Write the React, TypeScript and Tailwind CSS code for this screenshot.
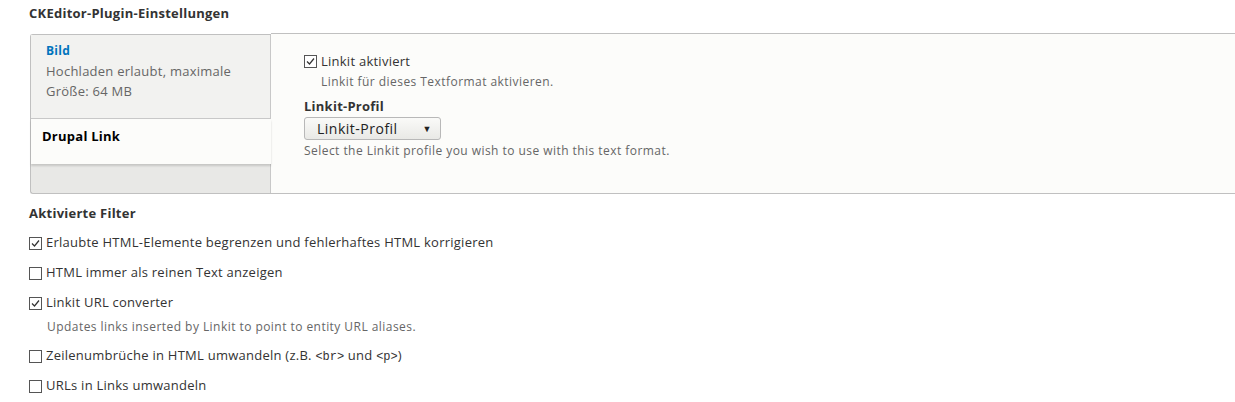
import { type ReactNode } from "react";

function Box({ checked }: { checked?: boolean }) {
  return (
    <span className="inline-flex h-[13px] w-[13px] shrink-0 items-center justify-center border border-[#555] bg-white">
      {checked && (
        <svg width="11" height="11" viewBox="0 0 11 11" fill="none">
          <path d="M2 5.5 L4.5 8 L9 2.5" stroke="#333" strokeWidth="1.2" />
        </svg>
      )}
    </span>
  );
}

const desc = "text-[12px] tracking-[0.45px] text-[#666]";

function Filter({ checked, children, note }: { checked?: boolean; children: ReactNode; note?: string }) {
  return (
    <div>
      <label className="flex h-[30px] items-center gap-[4px]">
        <Box checked={checked} />
        <span>{children}</span>
      </label>
      {note && <p className={`mb-[5px] pl-[18px] ${desc}`}>{note}</p>}
    </div>
  );
}

export default function App() {
  const mono = "font-['Liberation_Mono',monospace] text-[12px] tracking-normal";
  return (
    <div className="h-[402px] overflow-hidden bg-white font-['Open_Sans',sans-serif] text-[13px] tracking-[0.25px] text-[#333]">
      <div className="pl-[29px] pt-[4px]">
        <h3 className="text-[13px] font-bold leading-[18px]">CKEditor-Plugin-Einstellungen</h3>

        <div className="-mr-4 mt-[11px] flex h-[161px]">
          <div className="ml-px mt-px flex w-[241px] flex-col rounded-l-[3px] border-b border-l border-t border-[#c0c0c0] bg-[#e8e8e6]">
            <div className="h-[84px] border-b border-r border-[#c8c8c8] bg-[#f2f2f0] pl-[15px] pt-[6px] leading-[20px]">
              <div className="text-[12px] font-bold text-[#0074bd]">Bild</div>
              <div className="text-[#666]">Hochladen erlaubt, maximale</div>
              <div className="text-[#666]">Größe: 64 MB</div>
            </div>
            <div className="relative z-10 h-[45px] bg-[#fcfcfa] pl-[11px] pt-[8px] font-bold text-black shadow-[0_2px_2px_rgba(0,0,0,0.15)]">
              Drupal Link
            </div>
            <div className="flex-1 border-r border-[#c8c8c8]" />
          </div>

          <div className="flex-1 border-b border-t border-[#c0c0c0] bg-[#fcfcfa] pl-[33px] pt-[18px]">
            <label className="flex items-center gap-[4px]">
              <Box checked />
              <span>Linkit aktiviert</span>
            </label>
            <p className={`mt-[1px] pl-[17px] ${desc}`}>Linkit für dieses Textformat aktivieren.</p>
            <div className="mt-[6px] font-bold">Linkit-Profil</div>
            <div className="mt-[1px] flex h-[23px] w-[137px] items-center justify-between rounded-[3px] border border-[#b8b8b8] bg-gradient-to-b from-[#fafaf8] to-[#e9e9e6] pl-[12px] pr-[8px] text-[14px] tracking-[0.5px] text-[#222]">
              <span>Linkit-Profil</span>
              <span className="text-[9px]">▼</span>
            </div>
            <p className={`mt-[2px] ${desc}`}>Select the Linkit profile you wish to use with this text format.</p>
          </div>
        </div>

        <h3 className="mt-[10px] font-bold leading-[18px]">Aktivierte Filter</h3>
        <div className="mt-[6px]">
          <Filter checked>Erlaubte HTML-Elemente begrenzen und fehlerhaftes HTML korrigieren</Filter>
          <Filter>HTML immer als reinen Text anzeigen</Filter>
          <Filter checked note="Updates links inserted by Linkit to point to entity URL aliases.">
            Linkit URL converter
          </Filter>
          <Filter>
            Zeilenumbrüche in HTML umwandeln (z.B. <code className={mono}>&lt;br&gt;</code> und{" "}
            <code className={mono}>&lt;p&gt;</code>)
          </Filter>
          <Filter>URLs in Links umwandeln</Filter>
        </div>
      </div>
    </div>
  );
}
